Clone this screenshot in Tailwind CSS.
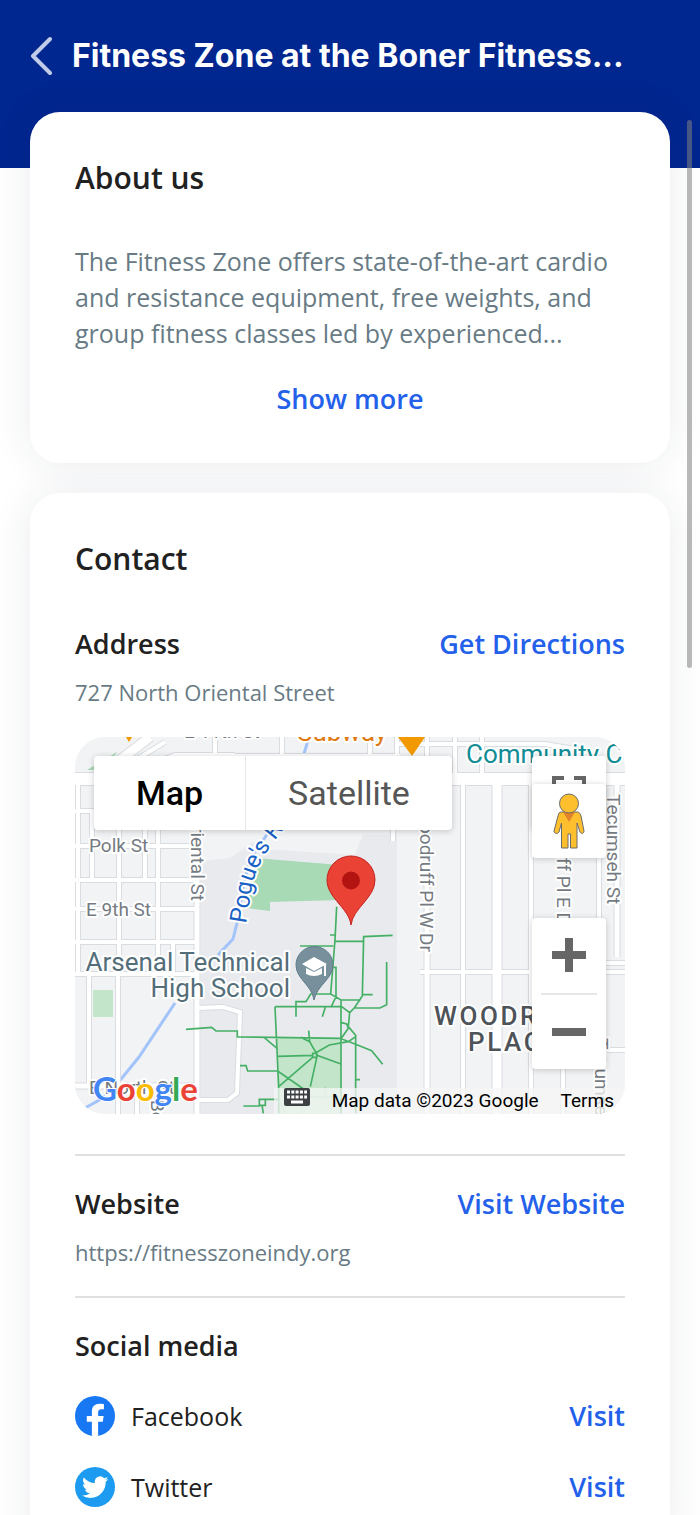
<!DOCTYPE html>
<html lang="en">

<head>
  <meta charset="UTF-8" />
  <meta name="viewport" content="width=device-width, initial-scale=1.0" />
  <title>Fitness Zone at the Boner Fitness...</title>
  <script src="https://cdn.jsdelivr.net/npm/@tailwindcss/browser@4"></script>
</head>

<body class="relative h-screen overflow-hidden bg-white font-['Open_Sans',sans-serif] text-[#212121]">
  <!-- Header -->
  <header class="h-[168px] bg-[#00268f] px-[30px]">
    <div class="flex h-[112px] items-center gap-5">
      <button class="shrink-0" aria-label="Back">
        <svg class="h-10 w-[22px]" viewBox="0 0 22 40" fill="none" stroke="#c0cbe8" stroke-width="4" stroke-linecap="round" stroke-linejoin="round">
          <path d="M20 3 3 20 20 37" />
        </svg>
      </button>
      <h1 class="truncate font-['Inter',sans-serif] text-[32px] font-bold text-white">Fitness Zone at the Boner Fitness...</h1>
    </div>
  </header>

  <main class="-mt-14 space-y-[30px] px-[30px]">
    <!-- About -->
    <section class="rounded-[30px] bg-white px-[45px] pt-11 pb-11 shadow-[0_0_40px_rgba(30,40,80,0.09)]">
      <h2 class="text-[30px] leading-11 font-semibold">About us</h2>
      <p class="mt-[43px] text-[25px] leading-9 text-[#687b85]">The Fitness Zone offers state-of-the-art cardio and resistance equipment, free weights, and group fitness classes led by experienced...</p>
      <div class="mt-7 text-center">
        <button class="text-[27px] leading-10 font-semibold text-[#2361eb]">Show more</button>
      </div>
    </section>

    <!-- Contact -->
    <section class="rounded-[30px] bg-white px-[45px] pt-11 pb-11 shadow-[0_0_40px_rgba(30,40,80,0.09)]">
      <h2 class="text-[30px] leading-11 font-semibold">Contact</h2>

      <div class="mt-[43px] flex items-center justify-between text-[27px] leading-10 font-semibold">
        <h3>Address</h3>
        <a href="#" class="text-[#2361eb]">Get Directions</a>
      </div>
      <p class="mt-3 text-[22px] leading-8 text-[#687b85]">727 North Oriental Street</p>

      <!-- Map -->
      <div class="relative mt-[29px] h-[377px] overflow-hidden rounded-[30px] bg-[#f1f3f4] font-['Roboto',sans-serif]">
        <svg class="h-full w-full" viewBox="0 0 550 377" preserveAspectRatio="xMidYMid slice">
          <defs>
            <path id="stream" d="M171 187 177 150Q182 122 215 85" />
          </defs>

          <!-- Land -->
          <path fill="#e8eaed" d="M126 124 155 121 178 105 188 112 280 118 288 98H322V377H126Z" />
          <path fill="#a8dab5" d="M180 121 265 128V163L195 165V174L172 171ZM12 33 42 15 30 33Z" />
          <path fill="#c3e6cb" d="M202 300 266 301V377H203ZM18 253H38V280H18Z" />
          <path fill="none" stroke="#a3c3fb" stroke-width="3" d="M10 371 28 361 47 341 64 320 100 266M143 218 158 202 162 186 168 150 176 120 196 92M228 20 234 0" />

          <!-- Street casing -->
          <g stroke="#d9dce1" fill="none">
            <path stroke-width="6" d="M0 74H90M0 109H122M0 143H122M0 172H122M0 205H122M0 237H122M17 76V143M70 76V143M98 205V237M62 349V377M123 271 148 270 165 275 162 356 153 363H123M75 28 100 18H160M30 42 90 5M155 19H325M318 40V104M320 7H470L500 12" />
            <path stroke-width="6" d="M3 45V237M44 76V237M43 237V377M83 76V237M14 237V349M140 0V16M207 0V40M295 0V40M322 0V40M352 0V40M380 0V40M407 0V40M388 40V377M456 40V377M488 300V377M345 235H550M524 45V377M500 313H550M530 226H550" />
            <path stroke-width="7" d="M122 120V377M0 349H122M352 40V377M542 40V220" />
            <path stroke-width="11" d="M422 40V377M32 33 75 0" />
            <path stroke-width="14" d="M0 42H550" />
          </g>
          <!-- Streets -->
          <g stroke="#fff" fill="none">
            <path stroke-width="4" d="M0 74H90M0 109H122M0 143H122M0 172H122M0 205H122M0 237H122M17 76V143M70 76V143M98 205V237M62 349V377M123 271 148 270 165 275 162 356 153 363H123M75 28 100 18H160M30 42 90 5M155 19H325M318 40V104M320 7H470L500 12" />
            <path stroke-width="4" d="M3 45V237M44 76V237M43 237V377M83 76V237M14 237V349M140 0V16M207 0V40M295 0V40M322 0V40M352 0V40M380 0V40M407 0V40M388 40V377M456 40V377M488 300V377M345 235H550M524 45V377M500 313H550M530 226H550" />
            <path stroke-width="5" d="M122 120V377M0 349H122M352 40V377M542 40V220" />
            <path stroke-width="9" d="M422 40V377M32 33 75 0" />
            <path stroke-width="12" d="M0 42H550" />
          </g>

          <!-- Footpaths -->
          <g transform="translate(165 183) scale(.3333)" fill="none" stroke="#45b065" stroke-width="5">
            <path d="M290-40 285 60 272 222M270 45H285M180 78H280M283 64H370M458 46 371 50 367 228 343 264H420L440 254V126M275 142H288V230L273 262M367 224H398M210 222H272L303 240H362M212 222 198 245H168V290M105 260H305L329 278 343 264M105 260 116 500V580M256 262 247 290M303 240V580M329 278 325 320 347 346V580M305 308 320 312 325 325 303 356 345 372 395 392 428 433M0 351 303 355M72 352 113 387M206 332 209 365 233 407 303 432M182 352 209 365M114 409 218 406M347 350 325 365 268 375 225 400M218 412 116 500M231 410 211 500M113 453 195 510M113 453H23L18 437H0M347 479H360M10 558H58V538H115M58 538H76V556H58M66 556 70 580M218 400H230V412H218Z" />
            <path d="M-162 328-85 322-72 333H-8V351H0" />
            <path d="M118 545 137 580M303 530H185V580M256 500V540" stroke="#a8dab5" />
          </g>

          <!-- Labels -->
          <g fill="#757b82" stroke="#fff" stroke-width="4" paint-order="stroke" stroke-linejoin="round" class="text-[19px]">
            <text x="109" y="1">E 11th St</text>
            <text x="14" y="115">Polk St</text>
            <text x="11" y="179">E 9th St</text>
            <text x="14" y="357">E North St</text>
            <text transform="translate(116 164) rotate(90)" text-anchor="end">Oriental St</text>
            <text transform="translate(345 215) rotate(90)" text-anchor="end">Woodruff Pl W Dr</text>
            <text transform="translate(482 55) rotate(90)">Woodruff Pl E Dr</text>
            <text transform="translate(532 57) rotate(90)">Tecumseh St</text>
            <text transform="translate(520 301) rotate(90)">Tecumseh St</text>
            <text transform="translate(76 363) rotate(90)">Beville Ave</text>
          </g>
          <g stroke="#fff" stroke-width="4" paint-order="stroke" stroke-linejoin="round">
            <text x="222" y="4" fill="#df7a13" class="text-[26px]">Subway</text>
            <text x="391" y="26" fill="#128c95" class="text-[26px]">Community C</text>
            <text fill="#1b62c5" class="text-[24px]"><textPath href="#stream">Pogue's Run</textPath></text>
            <g fill="#546e7a" text-anchor="end" class="text-[26px]">
              <text x="215" y="234">Arsenal Technical</text>
              <text x="215" y="260">High School</text>
            </g>
            <g fill="#4d5358" class="text-[26px] font-medium tracking-widest">
              <text x="359" y="288">WOODRUFF</text>
              <text x="393" y="314">PLACE</text>
            </g>
          </g>

          <!-- Markers -->
          <path fill="#f29900" d="M323 0H350L337 19ZM51 0H57L54 5Z" />
          <path fill="#78909c" stroke="#607d8b" d="M239 263C237 248 221 242 221 228A18.500 18.500 0 0 1 258 228C258 242 242 248 239 263Z" />
          <path fill="#fff" d="M239 220 252 227 239 234 227 227ZM231 231 239 235 247 231V237Q239 241 231 237ZM249 228H251V239H249Z" />
          <path fill="#ea4335" stroke="#c5221f" d="M276 188C274 171 252 161 252 143A24 24 0 0 1 300 143C300 161 278 171 276 188Z" />
          <circle cx="276" cy="143.500" r="9" fill="#b31412" />
        </svg>

        <!-- Map type -->
        <div class="absolute top-[19px] left-[19px] flex h-[74px] rounded-sm bg-white text-[34px] shadow-[0_1px_6px_rgba(0,0,0,0.2)]">
          <button class="w-[152px] border-r border-gray-200 font-medium text-black">Map</button>
          <button class="w-[206px] text-[#565656]">Satellite</button>
        </div>

        <!-- Fullscreen and street view -->
        <button class="absolute top-[19px] right-[19px] h-[74px] w-[74px] rounded-sm bg-white shadow-[0_1px_6px_rgba(0,0,0,0.2)]" aria-label="Toggle fullscreen view">
          <svg class="mx-auto h-[34px] w-[34px]" viewBox="0 0 34 34" fill="none" stroke="#666" stroke-width="4">
            <path d="M2 12V2H12M22 2H32V12M2 22V32H12M22 32H32V22" />
          </svg>
        </button>
        <button class="absolute top-[47px] right-[19px] h-[74px] w-[74px] rounded-sm bg-white shadow-[0_1px_6px_rgba(0,0,0,0.2)]" aria-label="Street View Pegman">
          <svg class="mx-auto h-14 w-8" viewBox="0 0 32 56" fill="#fdbf2d" stroke="#6b6b6b" stroke-width="1">
            <path d="M8 19H24C26 19 27 20 28 23L31 38C31 41 28 41 27 39L24 30V55H17.500V41H15V55H8.500V30L6 39C5 41 1 41 1 38L5 23C6 20 6 19 8 19Z" />
            <path d="M10 19H22L16 29Z" fill="#e1842b" stroke="none" />
            <circle cx="16" cy="10.500" r="9.500" />
          </svg>
        </button>

        <!-- Zoom -->
        <div class="absolute top-[181px] right-[19px] flex h-[151px] w-[74px] flex-col items-center rounded-sm bg-white shadow-[0_1px_6px_rgba(0,0,0,0.2)]">
          <button class="flex w-full flex-1 items-center justify-center" aria-label="Zoom in">
            <svg class="h-[34px] w-[34px]" viewBox="0 0 34 34" fill="#666"><path d="M13 0H21V13H34V21H21V34H13V21H0V13H13Z" /></svg>
          </button>
          <div class="h-0.5 w-14 bg-[#e6e6e6]"></div>
          <button class="flex w-full flex-1 items-center justify-center" aria-label="Zoom out">
            <svg class="h-[34px] w-[34px]" viewBox="0 0 34 34" fill="#666"><path d="M0 13H34V21H0Z" /></svg>
          </button>
        </div>

        <!-- Logo and attribution -->
        <a href="#" aria-label="Google" class="absolute bottom-0.5 left-[18px]">
          <svg class="h-10 w-[110px]" viewBox="0 0 110 40" stroke="#fff" stroke-width="2" paint-order="stroke">
            <text x="0" y="29" class="font-['Lato',sans-serif] text-[33px] font-bold"><tspan fill="#4285f4">G</tspan><tspan fill="#ea4335">o</tspan><tspan fill="#fbbc04">o</tspan><tspan fill="#4285f4">g</tspan><tspan fill="#34a853">l</tspan><tspan fill="#ea4335">e</tspan></text>
          </svg>
        </a>
        <div class="absolute right-0 bottom-0 flex h-[26px] items-center bg-[#f5f5f5]/75 pr-[11px] pl-[10px] text-[19px] text-black">
          <button class="mb-2 mr-[22px]" aria-label="Keyboard shortcuts">
            <svg class="h-[18px] w-[26px]" viewBox="0 0 26 18">
              <rect width="26" height="18" rx="2" fill="#3c4043" />
              <path d="M3 4H23M3 9H23" stroke="#fff" stroke-width="3" stroke-dasharray="3 1.300" />
              <path d="M7 14H19" stroke="#fff" stroke-width="3" />
            </svg>
          </button>
          <span>Map data ©2023 Google</span>
          <a href="#" class="ml-[22px]">Terms</a>
        </div>
      </div>

      <hr class="mt-10 border-t-2 border-[#e0e0e0]" />

      <div class="mt-7 flex items-center justify-between text-[27px] leading-10 font-semibold">
        <h3>Website</h3>
        <a href="#" class="text-[#2361eb]">Visit Website</a>
      </div>
      <p class="mt-3 text-[22px] leading-8 text-[#687b85]">https://fitnesszoneindy.org</p>

      <hr class="mt-7 border-t-2 border-[#e0e0e0]" />

      <h3 class="mt-7 text-[27px] leading-10 font-semibold">Social media</h3>
      <ul class="mt-[30px] space-y-[31px] text-[25px] leading-10">
        <li class="flex items-center">
          <svg class="mr-4 h-10 w-10" viewBox="0 0 24 24">
            <circle cx="12" cy="12" r="12" fill="#1877f2" />
            <path fill="#fff" d="M16.671 15.469 17.203 12h-3.328V9.749c0-.949.465-1.874 1.956-1.874h1.513V4.922s-1.374-.234-2.686-.234c-2.741 0-4.533 1.661-4.533 4.668V12H7.078v3.469h3.047V23.854a12.100 12.100 0 0 0 3.750 0V15.469Z" />
          </svg>
          <span>Facebook</span>
          <a href="#" class="ml-auto text-[27px] font-semibold text-[#2361eb]">Visit</a>
        </li>
        <li class="flex items-center">
          <svg class="mr-4 h-10 w-10" viewBox="0 0 40 40">
            <circle cx="20" cy="20" r="20" fill="#1d9bf0" />
            <path fill="#fff" transform="translate(7 7) scale(1.1)" d="M23.954 4.569a10 10 0 0 1-2.825.775 4.958 4.958 0 0 0 2.163-2.723c-.951.555-2.005.959-3.127 1.184a4.920 4.920 0 0 0-8.384 4.482C7.691 8.094 4.066 6.130 1.640 3.161a4.822 4.822 0 0 0-.666 2.475c0 1.710.870 3.213 2.188 4.096a4.904 4.904 0 0 1-2.228-.616v.061a4.923 4.923 0 0 0 3.946 4.827 4.996 4.996 0 0 1-2.212.085 4.937 4.937 0 0 0 4.604 3.417 9.868 9.868 0 0 1-6.102 2.105c-.390 0-.779-.023-1.170-.067a13.995 13.995 0 0 0 7.557 2.209c9.054 0 13.999-7.496 13.999-13.986 0-.209 0-.420-.015-.630a9.936 9.936 0 0 0 2.413-2.568Z" />
          </svg>
          <span>Twitter</span>
          <a href="#" class="ml-auto text-[27px] font-semibold text-[#2361eb]">Visit</a>
        </li>
      </ul>
    </section>
  </main>

  <!-- Scroll indicator -->
  <div class="absolute top-[120px] right-2 h-[548px] w-[5px] rounded-full bg-[#808080]/55"></div>
</body>

</html>
